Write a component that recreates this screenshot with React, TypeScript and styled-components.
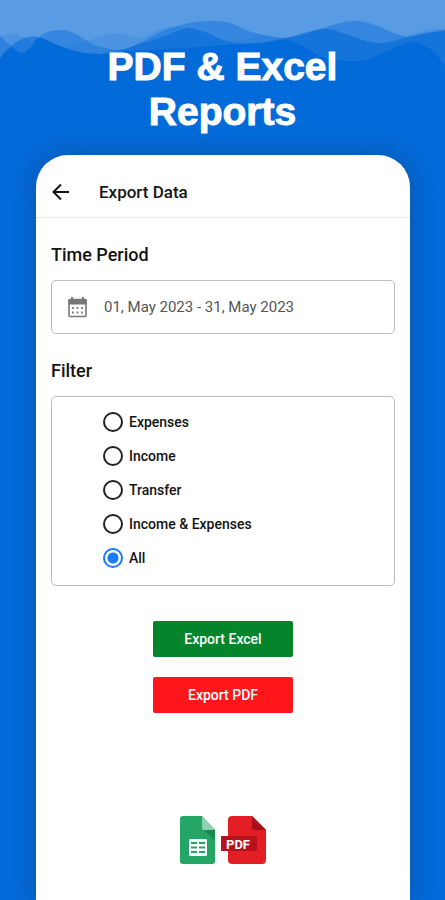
import React, { useState } from "react";
import styled, { createGlobalStyle } from "styled-components";

const GlobalStyle = createGlobalStyle`
  *, *::before, *::after { box-sizing: border-box; }
  body {
    margin: 0;
    background: #036ad9;
    color: #141414;
    font-family: Roboto, "Noto Sans", sans-serif;
  }
`;

const Page = styled.div`
  display: flex;
  flex-direction: column;
  min-height: 100vh;
  overflow: hidden;
`;

const Hero = styled.header`
  display: grid;
  & > * { grid-area: 1 / 1; }
`;

const Waves = styled.svg`
  display: block;
  width: 100%;
  height: 72px;
`;

const HeroTitle = styled.h1`
  z-index: 1;
  justify-self: center;
  width: 250px;
  margin: 0;
  padding: 44px 0 21px;
  color: #fff;
  font: 700 39px/45px "Liberation Sans", Arial, sans-serif;
  text-align: center;
  -webkit-text-stroke: 1px #fff;
`;

const Phone = styled.main`
  flex: 1;
  display: flex;
  flex-direction: column;
  margin: 0 35px 0 36px;
  border-radius: 32px 32px 0 0;
  background: #fff;
  box-shadow: 0 0 24px rgba(20, 70, 130, 0.6);
`;

const TopBar = styled.div`
  display: flex;
  align-items: center;
  gap: 27px;
  height: 63px;
  padding: 12px 14px 0;
  border-bottom: 1px solid #e8e8e8;
`;

const BackButton = styled.button`
  display: flex;
  padding: 0;
  border: 0;
  background: none;
  color: #141414;
`;

const BarTitle = styled.h2`
  margin: 0;
  font-size: 17px;
  line-height: 24px;
  font-weight: 500;
`;

const Form = styled.form`
  display: flex;
  flex-direction: column;
  padding: 25px 15px 36px;
`;

const SectionTitle = styled.h3`
  margin: 0 0 13px;
  font-size: 18px;
  line-height: 24px;
  font-weight: 500;
`;

const DateButton = styled.button`
  display: flex;
  align-items: center;
  gap: 16px;
  height: 54px;
  margin-bottom: 25px;
  padding: 0 15px;
  border: 1px solid #bdbdbd;
  border-radius: 5px;
  background: #fff;
  color: #555;
  font: 400 15px/20px Roboto, sans-serif;
`;

const Options = styled.div`
  display: flex;
  flex-direction: column;
  gap: 14px;
  margin-bottom: 35px;
  padding: 15px 51px 17px;
  border: 1px solid #bdbdbd;
  border-radius: 5px;
`;

const Option = styled.label`
  display: flex;
  align-items: center;
  gap: 6px;
  font-size: 14px;
  line-height: 20px;
  font-weight: 500;
`;

const Radio = styled.input`
  appearance: none;
  width: 20px;
  height: 20px;
  margin: 0;
  border: 2px solid #222;
  border-radius: 50%;
  &:checked {
    border-color: #1a7cf5;
    background: radial-gradient(circle, #1a7cf5 5px, #fff 6px);
  }
`;

const ExportButton = styled.button<{ $color: string }>`
  align-self: center;
  width: 140px;
  height: 36px;
  border: 0;
  border-radius: 2px;
  background: ${(p) => p.$color};
  color: #fff;
  font: 500 14px/20px Roboto, sans-serif;
  & + & { margin-top: 20px; }
`;

const FileIcons = styled.div`
  display: flex;
  justify-content: center;
  gap: 5px;
  margin-top: 67px;
`;

type Point = [number, number];

const ridge = (points: Point[]) => {
  let d = `M${points[0][0]} ${points[0][1]}`;
  for (let i = 0; i < points.length - 1; i++) {
    const a = points[Math.max(i - 1, 0)];
    const b = points[i];
    const c = points[i + 1];
    const e = points[Math.min(i + 2, points.length - 1)];
    d += ` C${b[0] + (c[0] - a[0]) / 6} ${b[1] + (c[1] - a[1]) / 6} ${c[0] - (e[0] - b[0]) / 6} ${c[1] - (e[1] - b[1]) / 6} ${c[0]} ${c[1]}`;
  }
  return `${d} V72 H0 Z`;
};

const ridges: { points: Point[]; opacity: number }[] = [
  { opacity: 0.15, points: [[0, 36], [13, 34], [26, 38], [50, 50], [80, 43], [105, 35], [122, 34], [140, 38], [160, 29], [180, 27], [210, 38], [240, 40], [262, 35], [290, 38], [318, 29], [350, 35], [380, 43], [415, 33], [430, 29], [445, 29]] },
  { opacity: 0.42, points: [[0, 36], [10, 45], [22, 53], [31, 47], [43, 34], [60, 30], [76, 34], [95, 45], [120, 50], [137, 44], [165, 30], [190, 23], [210, 21], [230, 23], [255, 33], [290, 38], [320, 29], [340, 23], [358, 21], [375, 25], [400, 35], [415, 36], [445, 31]] },
  { opacity: 0.6, points: [[0, 58], [12, 45], [25, 38], [38, 37], [55, 44], [75, 51], [100, 54], [120, 50], [140, 44], [165, 36], [187, 28], [205, 32], [230, 42], [260, 43], [285, 38], [325, 29], [345, 34], [370, 42], [390, 42], [420, 34], [445, 30]] },
  { opacity: 1, points: [[0, 59], [10, 48], [22, 53], [31, 47], [39, 38], [55, 44], [75, 51], [100, 54], [140, 50], [187, 48], [225, 45], [260, 43], [285, 40], [302, 46], [322, 57], [345, 61], [365, 60], [385, 52], [412, 42], [430, 49], [445, 65]] },
];

const WaveBackdrop = () => (
  <Waves viewBox="0 0 445 72" preserveAspectRatio="none" aria-hidden="true">
    <rect width="445" height="72" fill="#5a9ce3" />
    {ridges.map((r, i) => (
      <path key={i} d={ridge(r.points)} fill="#036ad9" opacity={r.opacity} />
    ))}
  </Waves>
);

const BackIcon = () => (
  <svg width="22" height="22" viewBox="0 0 22 22" fill="none" stroke="currentColor" strokeWidth="2" aria-hidden="true">
    <path d="M19 11H4M11 3.5 3.5 11l7.5 7.5" />
  </svg>
);

const CalendarIcon = () => (
  <svg width="21" height="22" viewBox="0 0 21 22" aria-hidden="true">
    <path d="M5 1v3M16 1v3" stroke="#777" strokeWidth="2" />
    <rect x="2" y="3.5" width="17" height="17" rx="1" fill="#fff" stroke="#777" strokeWidth="1.6" />
    <path d="M1.500 3h18v5.500h-18z" fill="#777" />
    <path d="M5 12h2M9.500 12h2M14 12h2M5 16.500h2M9.500 16.500h2M14 16.500h2" stroke="#888" strokeWidth="2" />
  </svg>
);

const SheetIcon = () => (
  <svg width="36" height="48" viewBox="0 0 36 48" aria-hidden="true">
    <path d="M3 0h19l13 14v31q0 3-3 3H3q-3 0-3-3V3q0-3 3-3Z" fill="#23a566" />
    <path d="M23 13h12v12Z" fill="#178a50" />
    <path d="M22 0l13 14H24q-2 0-2-2Z" fill="#8ed1b1" />
    <rect x="9" y="23" width="18" height="17" rx="1" fill="#fff" />
    <path d="M11 26h6v2h-6zM19 26h6v2h-6zM11 30.500h6v2h-6zM19 30.500h6v2h-6zM11 35h6v2h-6zM19 35h6v2h-6z" fill="#23a566" />
  </svg>
);

const PdfIcon = () => (
  <svg width="45" height="48" viewBox="0 0 45 48" aria-hidden="true">
    <path d="M11 0h20l14 14v30q0 4-4 4H11q-4 0-4-4V4q0-4 4-4Z" fill="#e31e24" />
    <path d="M31 0l14 14H34q-3 0-3-3Z" fill="#a80f17" />
    <path d="M0 20h34q2 0 2 2v11q0 2-2 2H0Z" fill="#b5121b" />
    <text x="5" y="33" fill="#fff" fontFamily="Roboto, sans-serif" fontWeight="700" fontSize="13">PDF</text>
  </svg>
);

const filters = ["Expenses", "Income", "Transfer", "Income & Expenses", "All"];

export default function App() {
  const [filter, setFilter] = useState("All");
  return (
    <Page>
      <GlobalStyle />
      <Hero>
        <WaveBackdrop />
        <HeroTitle>PDF &amp; Excel Reports</HeroTitle>
      </Hero>
      <Phone>
        <TopBar>
          <BackButton type="button" aria-label="Back"><BackIcon /></BackButton>
          <BarTitle>Export Data</BarTitle>
        </TopBar>
        <Form onSubmit={(e) => e.preventDefault()}>
          <SectionTitle>Time Period</SectionTitle>
          <DateButton type="button">
            <CalendarIcon />
            01, May 2023 - 31, May 2023
          </DateButton>
          <SectionTitle id="filter-title">Filter</SectionTitle>
          <Options role="radiogroup" aria-labelledby="filter-title">
            {filters.map((name) => (
              <Option key={name}>
                <Radio type="radio" name="filter" checked={filter === name} onChange={() => setFilter(name)} />
                {name}
              </Option>
            ))}
          </Options>
          <ExportButton type="button" $color="#05852b">Export Excel</ExportButton>
          <ExportButton type="button" $color="#ff161b">Export PDF</ExportButton>
        </Form>
        <FileIcons>
          <SheetIcon />
          <PdfIcon />
        </FileIcons>
      </Phone>
    </Page>
  );
}
